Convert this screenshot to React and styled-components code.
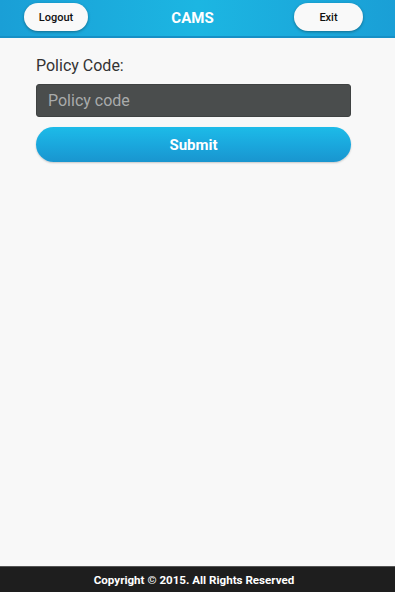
import { createGlobalStyle, styled } from "styled-components";

const GlobalStyle = createGlobalStyle`
  html, body {
    margin: 0;
    padding: 0;
    height: 100%;
    background: #f8f8f8;
    font-family: Roboto, "Liberation Sans", sans-serif;
  }
  #root {
    min-height: 100vh;
    display: flex;
    flex-direction: column;
  }
`;

function App() {
  return (
    <>
      <GlobalStyle />
      <Header>
        <PillButton $width={64}>Logout</PillButton>
        <Title>CAMS</Title>
        <PillButton $width={69}>Exit</PillButton>
      </Header>
      <Main>
        <Label>Policy Code:</Label>
        <CodeInput placeholder="Policy code" />
        <SubmitButton>Submit</SubmitButton>
      </Main>
      <Footer>Copyright © 2015. All Rights Reserved</Footer>
    </>
  );
}

export default App;

const Header = styled.header`
  display: flex;
  align-items: center;
  justify-content: space-between;
  height: 38px;
  padding: 0 32px 2px 24px;
  box-sizing: border-box;
  background: linear-gradient(90deg, #1a9fd6 0%, #1cb6e2 50%, #1a9fd6 100%);
  border-bottom: 2px solid #1690c6;
`;

const PillButton = styled.button`
  width: ${(props) => props.$width}px;
  height: 28px;
  border: none;
  border-radius: 14px;
  background: #f9f9f9;
  box-shadow: 0 1px 3px rgba(0, 0, 0, 0.35);
  font-family: Roboto, "Liberation Sans", sans-serif;
  font-size: 11px;
  font-weight: 500;
  color: #111;
  padding: 0;
  cursor: pointer;
`;

const Title = styled.h1`
  margin: 2px 0 0 3px;
  font-size: 15px;
  font-weight: 700;
  color: #ffffff;
`;

const Main = styled.main`
  flex: 1;
  display: flex;
  flex-direction: column;
  padding: 18px 44px 0 36px;
`;

const Label = styled.label`
  font-size: 16px;
  line-height: 20px;
  color: #333;
`;

const CodeInput = styled.input`
  margin-top: 8px;
  height: 33px;
  box-sizing: border-box;
  border: 1px solid #3f4242;
  border-radius: 3px;
  background: #4a4d4d;
  padding: 0 11px;
  font-family: Roboto, "Liberation Sans", sans-serif;
  font-size: 16px;
  color: #eee;
  outline: none;

  &::placeholder {
    color: #a9abab;
  }
`;

const SubmitButton = styled.button`
  margin-top: 10px;
  height: 35px;
  border: none;
  border-radius: 18px;
  background: linear-gradient(180deg, #1dbbe8 0%, #1aa6dc 55%, #1995cf 100%);
  box-shadow: 0 1px 2px rgba(0, 0, 0, 0.2);
  font-family: Roboto, "Liberation Sans", sans-serif;
  font-size: 15px;
  font-weight: 700;
  color: #ffffff;
  cursor: pointer;
`;

const Footer = styled.footer`
  height: 26px;
  display: flex;
  align-items: center;
  justify-content: center;
  padding-right: 7px;
  background: #1e1e1e;
  border-top: 1px solid #555;
  box-sizing: border-box;
  font-size: 11.6px;
  font-weight: 700;
  color: #ffffff;
`;
